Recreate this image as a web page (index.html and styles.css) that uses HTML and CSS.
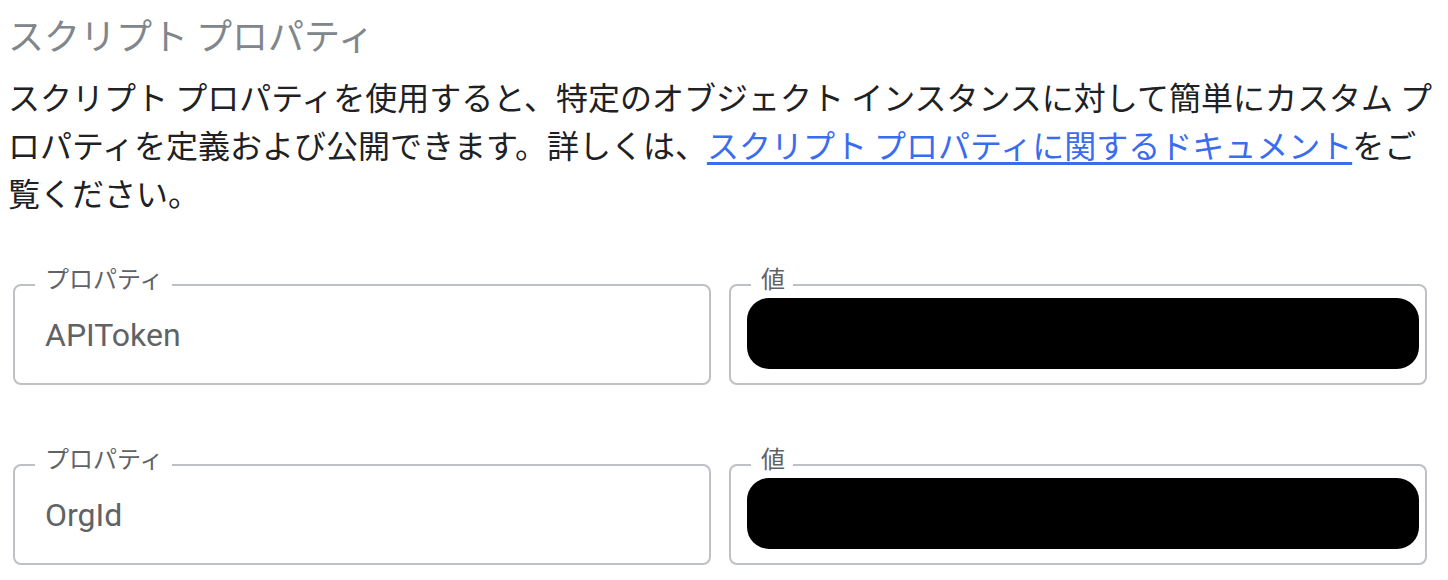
FILE: index.html
```html
<!DOCTYPE html>
<html lang="ja">
<head>
    <meta charset="utf-8">
    <title>スクリプト プロパティ</title>
    <link rel="stylesheet" href="styles.css">
</head>
<body>
    <section class="props">
        <h1 class="props-title">スクリプト プロパティ</h1>
        <p class="props-desc">スクリプト プロパティを使用すると、特定のオブジェクト インスタンスに対して簡単にカスタム プロパティを定義および公開できます。詳しくは、<a href="#">スクリプト プロパティに関するドキュメント</a>をご覧ください。</p>

        <div class="props-grid">
            <fieldset class="field">
                <legend>プロパティ</legend>
                <div class="field-text">APIToken</div>
            </fieldset>
            <fieldset class="field field-value">
                <legend>値</legend>
                <div class="redacted"></div>
            </fieldset>

            <fieldset class="field">
                <legend>プロパティ</legend>
                <div class="field-text">OrgId</div>
            </fieldset>
            <fieldset class="field field-value">
                <legend>値</legend>
                <div class="redacted"></div>
            </fieldset>
        </div>
    </section>
</body>
</html>
```

FILE: styles.css
```css
body {
    margin: 8px;
    background: white;
    font-family: Roboto, "Noto Sans CJK JP", sans-serif;
}

.props-title {
    margin: 0;
    padding-top: 6px;
    font-family: "Noto Sans CJK JP", sans-serif;
    font-size: 36px;
    font-weight: 400;
    line-height: 40px;
    color: #80868b;
}

.props-desc {
    margin: 18px 0 0 0;
    font-family: "Noto Sans CJK JP", sans-serif;
    font-size: 32px;
    line-height: 48px;
    color: #202124;
}

.props-desc a {
    color: #3a6cef;
    text-decoration-thickness: 3px;
    text-underline-offset: 4px;
}

.props-grid {
    display: grid;
    grid-template-columns: 1fr 1fr;
    column-gap: 18px;
    row-gap: 63px;
    margin: 52px 13px 0 5px;
}

.field {
    margin: 0;
    min-width: 0;
    padding: 0 6px 0 20px;
    border: 2px solid #bdc1c6;
    border-radius: 8px;
}

.field legend {
    padding: 0 8px 10px 10px;
    font-size: 24px;
    line-height: 24px;
    color: #5f6368;
}

.field-text {
    height: 66px;
    padding: 0 0 15px 10px;
    display: flex;
    align-items: center;
    font-size: 32px;
    color: #5f6368;
}

.redacted {
    height: 71px;
    margin: -4px 0 14px -4px;
    background: black;
    border-radius: 22px;
}
```
